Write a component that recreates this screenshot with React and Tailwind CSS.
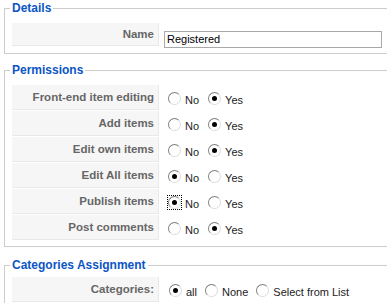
import React from "react";

const font = { fontFamily: '"Liberation Sans", Arial, sans-serif' };

// classic windows style radio
const Radio = ({ checked, focus, className = "" }) => (
  <span
    className={`relative inline-block w-[13px] h-[13px] shrink-0 ${focus ? "outline-1 outline-dotted outline-black" : ""} ${className}`}
  >
    <span className="absolute inset-0 rounded-full border border-t-[#808080] border-l-[#808080] border-b-[#dcdcdc] border-r-[#dcdcdc] bg-white" />
    {checked && <span className="absolute left-[4px] top-[4px] w-[5px] h-[5px] rounded-full bg-black" />}
  </span>
);

const Opt = ({ label, checked, focus, gap = "ml-[9px]" }) => (
  <>
    <Radio checked={checked} focus={focus} className={gap} />
    <span className="ml-[4px] mt-[2px] text-[11px] leading-[13px] text-[#222]">{label}</span>
  </>
);

const Row = ({ label, children, details }) => (
  <div className={`flex mb-[1px] ${details ? "h-[23px]" : "h-[25px]"}`}>
    <div
      className={`w-[147px] shrink-0 bg-[#f6f6f6] border-b border-r border-[#e9e9e9] text-right pr-[4px] font-bold text-[#666] text-[11.5px] leading-[13px] ${details ? "pt-[5px]" : "pt-[6px]"}`}
    >
      {label}
    </div>
    {children}
  </div>
);

const YesNo = ({ yes, focus }) => (
  <div className="flex items-start pl-[9px] pt-[7px]">
    <Opt label="No" checked={!yes} focus={focus} gap="" />
    <Opt label="Yes" checked={yes} />
  </div>
);

const Box = ({ title, className = "", children }) => (
  <fieldset className={`border border-[#ccc] px-[7px] w-[396px] ${className}`}>
    <legend className="ml-[-2px] px-[2px] text-[12px] leading-[16px] font-bold text-[#0B55C4]">{title}</legend>
    {children}
  </fieldset>
);

const perms = [
  ["Front-end item editing", true],
  ["Add items", true],
  ["Edit own items", true],
  ["Edit All items", false],
  ["Publish items", false, true],
  ["Post comments", true],
];

export default function App() {
  return (
    <div className="w-[387px] h-[303px] overflow-hidden bg-white pl-[4px]" style={font}>
      <Box title="Details" className="pt-[7px] pb-[6px]">
        <Row label="Name" details>
          <div className="pl-[5px] pt-[3px]">
            <input
              readOnly
              value="Registered"
              className="w-[218px] h-[17px] border border-[#a9a9a9] px-[2px] text-[11px] leading-[13px] text-black outline-none"
              style={font}
            />
          </div>
        </Row>
      </Box>

      <Box title="Permissions" className="mt-[8px] pt-[7px] pb-[5px]">
        {perms.map(([label, yes, focus]) => (
          <Row key={label} label={label}>
            <YesNo yes={yes} focus={focus} />
          </Row>
        ))}
      </Box>

      <Box title="Categories Assignment" className="mt-[10px] pt-[4px] pb-[5px]">
        <Row label="Categories:">
          <div className="flex items-start pl-[10px] pt-[7px]">
            <Opt label="all" checked gap="" />
            <Opt label="None" gap="ml-[8px]" />
            <Opt label="Select from List" gap="ml-[8px]" />
          </div>
        </Row>
      </Box>
    </div>
  );
}
